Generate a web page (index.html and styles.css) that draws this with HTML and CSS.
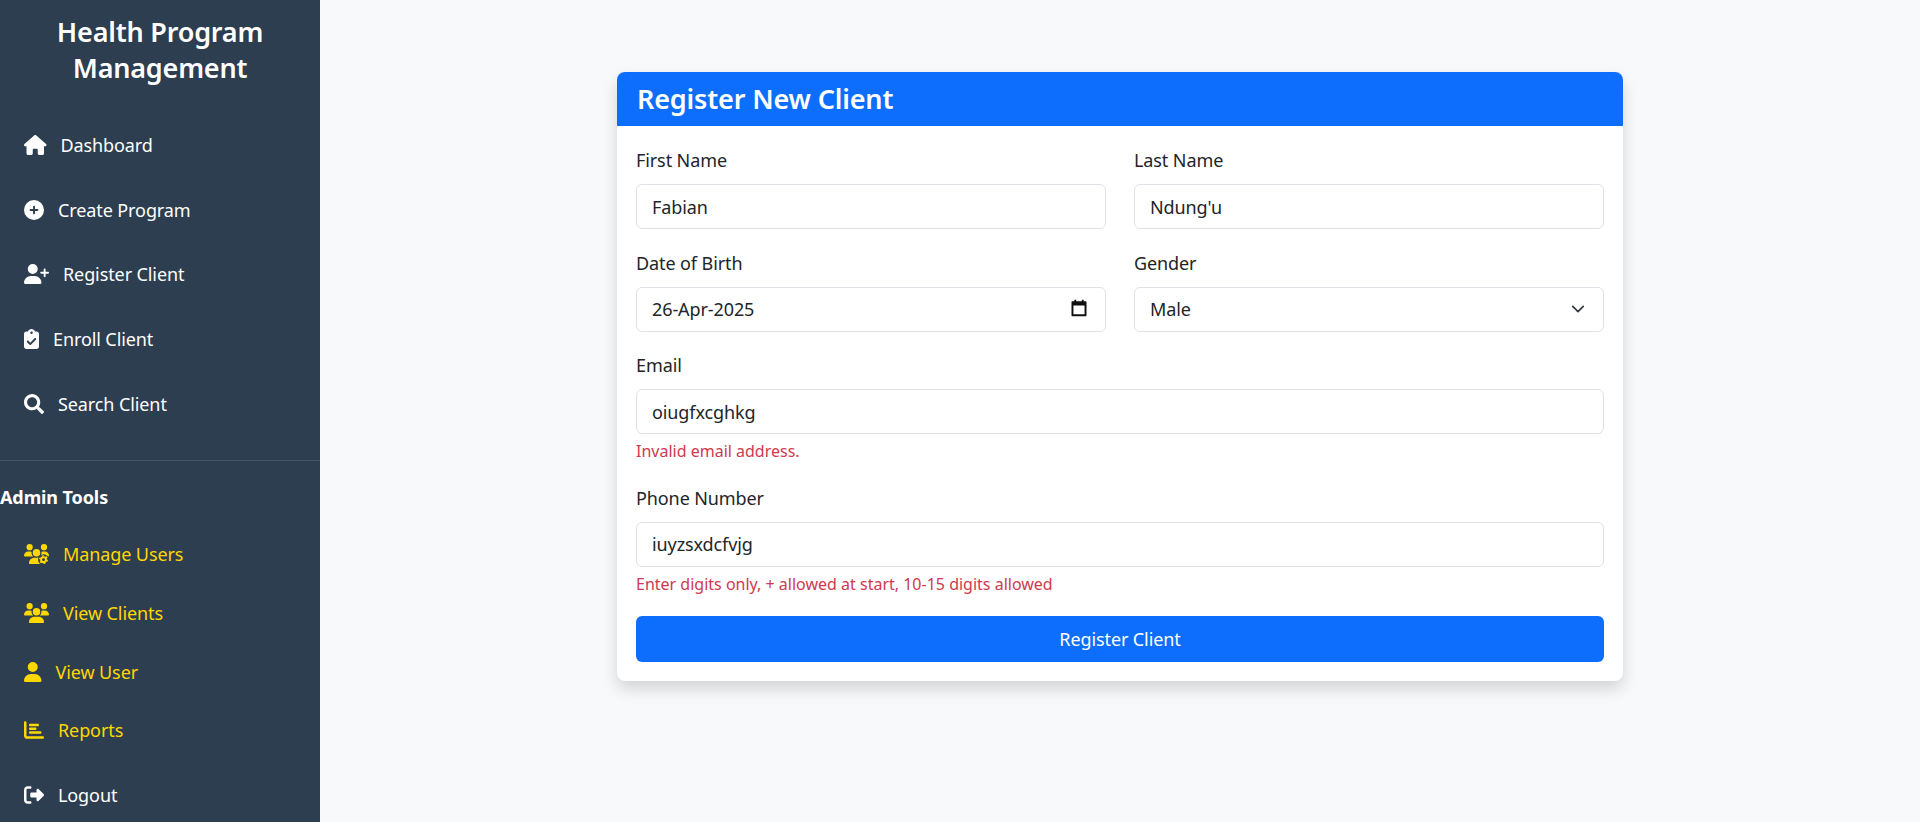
FILE: index.html
```html
<!DOCTYPE html>
<html lang="en">
  <head>
    <meta charset="UTF-8" />
    <meta name="viewport" content="width=device-width, initial-scale=1.0" />
    <title>Register New Client</title>
    <link rel="stylesheet" href="styles.css">
  </head>
  <body>
    <aside class="sidebar">
      <h2 class="brand">Health Program Management</h2>
      <nav class="nav-main">
        <a class="nav-link" href="#"><svg class="icon" viewBox="0 0 576 512"><path d="M575.8 255.5c0 18-15 32.1-32 32.1h-32l.7 160.2c0 2.7-.2 5.4-.5 8.1V472c0 22.1-17.9 40-40 40H456c-1.1 0-2.2 0-3.3-.1c-1.4 .1-2.8 .1-4.2 .1H416 392c-22.1 0-40-17.9-40-40V448 384c0-17.7-14.3-32-32-32H256c-17.7 0-32 14.3-32 32v64 24c0 22.1-17.9 40-40 40H160 128.1c-1.5 0-3-.1-4.5-.2c-1.2 .1-2.4 .2-3.6 .2H104c-22.1 0-40-17.9-40-40V360c0-.9 0-1.9 .1-2.8V287.6H32c-18 0-32-14-32-32.1c0-9 3-17 10-24L266.4 8c7-7 15-8 22-8s15 2 21 7L564.8 231.5c8 7 12 15 11 24z"/></svg>Dashboard</a>
        <a class="nav-link" href="#"><svg class="icon" viewBox="0 0 512 512"><path d="M256 512A256 256 0 1 0 256 0a256 256 0 1 0 0 512zM232 344V280H168c-13.3 0-24-10.7-24-24s10.7-24 24-24h64V168c0-13.3 10.7-24 24-24s24 10.7 24 24v64h64c13.3 0 24 10.7 24 24s-10.7 24-24 24H280v64c0 13.3-10.7 24-24 24s-24-10.7-24-24z"/></svg>Create Program</a>
        <a class="nav-link" href="#"><svg class="icon" viewBox="0 0 640 512"><path d="M96 128a128 128 0 1 1 256 0A128 128 0 1 1 96 128zM0 482.3C0 383.8 79.8 304 178.3 304h91.4C368.2 304 448 383.8 448 482.3c0 16.4-13.3 29.7-29.7 29.7H29.7C13.3 512 0 498.7 0 482.3zM504 312V248H440c-13.3 0-24-10.7-24-24s10.7-24 24-24h64V136c0-13.3 10.7-24 24-24s24 10.7 24 24v64h64c13.3 0 24 10.7 24 24s-10.7 24-24 24H552v64c0 13.3-10.7 24-24 24s-24-10.7-24-24z"/></svg>Register Client</a>
        <a class="nav-link" href="#"><svg class="icon" viewBox="0 0 384 512"><path d="M192 0c-41.8 0-77.4 26.7-90.5 64H64C28.7 64 0 92.7 0 128V448c0 35.3 28.7 64 64 64H320c35.3 0 64-28.7 64-64V128c0-35.3-28.7-64-64-64H282.5C269.4 26.7 233.8 0 192 0zm0 64a32 32 0 1 1 0 64 32 32 0 1 1 0-64zM305 273L177 401c-9.4 9.4-24.6 9.4-33.9 0L79 337c-9.4-9.4-9.4-24.6 0-33.9s24.6-9.4 33.9 0l47 47L271 239c9.4-9.4 24.6-9.4 33.9 0s9.4 24.6 0 33.9z"/></svg>Enroll Client</a>
        <a class="nav-link" href="#"><svg class="icon" viewBox="0 0 512 512"><path d="M505 442.7L405.3 343c-4.5-4.5-10.6-7-17-7H372c27.6-35.3 44-79.7 44-128C416 93.1 322.9 0 208 0S0 93.1 0 208s93.1 208 208 208c48.3 0 92.7-16.4 128-44v16.3c0 6.4 2.5 12.5 7 17l99.7 99.7c9.4 9.4 24.6 9.4 33.9 0l28.3-28.3c9.4-9.4 9.4-24.6.1-34zM208 336c-70.7 0-128-57.2-128-128 0-70.7 57.2-128 128-128 70.7 0 128 57.2 128 128 0 70.7-57.2 128-128 128z"/></svg>Search Client</a>
      </nav>
      <div class="admin">
        <h3 class="admin-title">Admin Tools</h3>
        <a class="nav-link admin-link" href="#"><svg class="icon" viewBox="0 0 640 512"><path d="M144 0a80 80 0 1 1 0 160A80 80 0 1 1 144 0zM512 0a80 80 0 1 1 0 160A80 80 0 1 1 512 0zM0 298.7C0 239.8 47.8 192 106.7 192h42.7c15.9 0 31 3.5 44.6 9.7c-1.3 7.2-1.9 14.7-1.9 22.3c0 38.2 16.8 72.5 43.3 96c-.2 0-.4 0-.7 0H21.3C9.6 320 0 310.4 0 298.7zM405.3 320c-.2 0-.4 0-.7 0c26.6-23.5 43.3-57.8 43.3-96c0-7.6-.7-15-1.9-22.3c13.6-6.3 28.7-9.7 44.6-9.7h42.7C592.2 192 640 239.8 640 298.7c0 11.8-9.6 21.3-21.3 21.3H405.3zM224 224a96 96 0 1 1 192 0 96 96 0 1 1 -192 0zM128 485.3C128 411.7 187.7 352 261.3 352H378.7C452.3 352 512 411.7 512 485.3c0 14.7-11.9 26.7-26.7 26.7H154.7c-14.7 0-26.7-11.9-26.7-26.7z"/><circle cx="500" cy="400" r="140" fill="#2c3e50"/><circle cx="500" cy="400" r="62" fill="none" stroke="currentColor" stroke-width="50"/><circle cx="500" cy="400" r="94" fill="none" stroke="currentColor" stroke-width="40" stroke-dasharray="48 50"/></svg>Manage Users</a>
        <a class="nav-link admin-link" href="#"><svg class="icon" viewBox="0 0 640 512"><path d="M144 0a80 80 0 1 1 0 160A80 80 0 1 1 144 0zM512 0a80 80 0 1 1 0 160A80 80 0 1 1 512 0zM0 298.7C0 239.8 47.8 192 106.7 192h42.7c15.9 0 31 3.5 44.6 9.7c-1.3 7.2-1.9 14.7-1.9 22.3c0 38.2 16.8 72.5 43.3 96c-.2 0-.4 0-.7 0H21.3C9.6 320 0 310.4 0 298.7zM405.3 320c-.2 0-.4 0-.7 0c26.6-23.5 43.3-57.8 43.3-96c0-7.6-.7-15-1.9-22.3c13.6-6.3 28.7-9.7 44.6-9.7h42.7C592.2 192 640 239.8 640 298.7c0 11.8-9.6 21.3-21.3 21.3H405.3zM224 224a96 96 0 1 1 192 0 96 96 0 1 1 -192 0zM128 485.3C128 411.7 187.7 352 261.3 352H378.7C452.3 352 512 411.7 512 485.3c0 14.7-11.9 26.7-26.7 26.7H154.7c-14.7 0-26.7-11.9-26.7-26.7z"/></svg>View Clients</a>
        <a class="nav-link admin-link" href="#"><svg class="icon" viewBox="0 0 448 512"><path d="M224 256A128 128 0 1 0 224 0a128 128 0 1 0 0 256zm-45.7 48C79.8 304 0 383.8 0 482.3C0 498.7 13.3 512 29.7 512H418.3c16.4 0 29.7-13.3 29.7-29.7C448 383.8 368.2 304 269.7 304H178.3z"/></svg>View User</a>
        <a class="nav-link admin-link" href="#"><svg class="icon" viewBox="0 0 512 512"><path d="M32 32c17.7 0 32 14.3 32 32V400c0 8.8 7.2 16 16 16H480c17.7 0 32 14.3 32 32s-14.3 32-32 32H80c-44.2 0-80-35.8-80-80V64C0 46.3 14.3 32 32 32zm96 96c0-17.7 14.3-32 32-32l192 0c17.7 0 32 14.3 32 32s-14.3 32-32 32l-192 0c-17.7 0-32-14.3-32-32zm32 64H288c17.7 0 32 14.3 32 32s-14.3 32-32 32H160c-17.7 0-32-14.3-32-32s14.3-32 32-32zm0 96H416c17.7 0 32 14.3 32 32s-14.3 32-32 32H160c-17.7 0-32-14.3-32-32s14.3-32 32-32z"/></svg>Reports</a>
        <a class="nav-link logout" href="#"><svg class="icon" viewBox="0 0 512 512"><path d="M377.9 105.9L500.7 228.7c7.2 7.2 11.3 17.1 11.3 27.3s-4.1 20.1-11.3 27.3L377.9 406.1c-6.4 6.4-15 9.9-24 9.9c-18.7 0-33.9-15.2-33.9-33.9l0-62.1-128 0c-17.7 0-32-14.3-32-32l0-64c0-17.7 14.3-32 32-32l128 0 0-62.1c0-18.7 15.2-33.9 33.9-33.9c9 0 17.6 3.6 24 9.9zM160 96L96 96c-17.7 0-32 14.3-32 32l0 256c0 17.7 14.3 32 32 32l64 0c17.7 0 32 14.3 32 32s-14.3 32-32 32l-64 0c-53 0-96-43-96-96L0 128C0 75 43 32 96 32l64 0c17.7 0 32 14.3 32 32s-14.3 32-32 32z"/></svg>Logout</a>
      </div>
    </aside>
    <main class="content">
      <section class="card">
        <h1 class="card-header">Register New Client</h1>
        <form class="card-body">
          <div class="row">
            <div class="field">
              <label class="field-label" for="first">First Name</label>
              <input class="control" id="first" type="text" value="Fabian" />
            </div>
            <div class="field">
              <label class="field-label" for="last">Last Name</label>
              <input class="control" id="last" type="text" value="Ndung'u" />
            </div>
          </div>
          <div class="row">
            <div class="field">
              <label class="field-label" for="dob">Date of Birth</label>
              <div class="control-wrap">
                <input class="control" id="dob" type="text" value="26-Apr-2025" />
                <svg class="date-icon" viewBox="0 0 24 24"><path d="M7 1v3M17 1v3" stroke="#111" stroke-width="2.4" fill="none"/><path fill-rule="evenodd" d="M3 3h18a1 1 0 0 1 1 1v18a1 1 0 0 1-1 1H3a1 1 0 0 1-1-1V4a1 1 0 0 1 1-1zM4.6 8.5v11.9h14.8V8.5z" fill="#111"/></svg>
              </div>
            </div>
            <div class="field">
              <label class="field-label" for="gender">Gender</label>
              <div class="control-wrap">
                <select class="control select" id="gender"><option>Male</option><option>Female</option></select>
                <svg class="select-icon" viewBox="0 0 16 16"><path d="M2 5l6 6 6-6" fill="none" stroke="#343a40" stroke-width="2" stroke-linecap="round" stroke-linejoin="round"/></svg>
              </div>
            </div>
          </div>
          <div class="field">
            <label class="field-label" for="email">Email</label>
            <input class="control" id="email" type="text" value="oiugfxcghkg" />
            <div class="field-error">Invalid email address.</div>
          </div>
          <div class="field">
            <label class="field-label" for="phone">Phone Number</label>
            <input class="control" id="phone" type="text" value="iuyzsxdcfvjg" />
            <div class="field-error">Enter digits only, + allowed at start, 10-15 digits allowed</div>
          </div>
          <button class="submit" type="button">Register Client</button>
        </form>
      </section>
    </main>
  </body>
</html>
```

FILE: styles.css
```css
* {
  box-sizing: border-box;
}
html,
body {
  height: 100%;
}
body {
  margin: 0;
  display: flex;
  overflow: hidden;
  font-family: "Noto Sans", "Open Sans", sans-serif;
  font-size: 18px;
  color: #212529;
  background: #f8f9fa;
}
.sidebar {
  flex: 0 0 320px;
  height: 100vh;
  overflow: hidden;
  background: #2c3e50;
  color: #fff;
}
.brand {
  margin: 14px 24px 0;
  font-size: 27px;
  font-weight: 600;
  line-height: 36px;
  letter-spacing: -0.2px;
  text-align: center;
}
.nav-main {
  display: flex;
  flex-direction: column;
  margin-top: 26.5px;
  padding-bottom: 23.5px;
  border-bottom: 1px solid #445566;
}
.nav-link {
  display: flex;
  align-items: center;
  gap: 14px;
  height: 64.75px;
  padding-left: 24px;
  font-size: 18px;
  letter-spacing: -0.1px;
  color: #fff;
  text-decoration: none;
}
.icon {
  height: 20px;
  flex: none;
  fill: currentColor;
}
.admin-title {
  margin: 23px 0 15px;
  font-size: 18px;
  font-weight: 700;
  line-height: 26px;
  letter-spacing: -0.1px;
}
.admin-link {
  height: 58.75px;
  color: #ffd700;
}
.logout {
  margin-top: 3px;
}
.content {
  flex: 1;
  display: flex;
  justify-content: center;
  align-items: flex-start;
  padding-top: 72px;
}
.card {
  width: 1006px;
  background: #fff;
  border-radius: 8px;
  overflow: hidden;
  box-shadow: 0 8px 16px rgba(0, 0, 0, 0.15);
}
.card-header {
  margin: 0;
  height: 54px;
  padding: 0 20px;
  font-size: 27px;
  font-weight: 600;
  line-height: 54px;
  letter-spacing: -0.15px;
  color: #fff;
  background: #0d6efd;
}
.card-body {
  display: flex;
  flex-direction: column;
  gap: 20.5px;
  padding: 21px 19px 19px;
}
.row {
  display: grid;
  grid-template-columns: 1fr 1fr;
  gap: 28px;
}
.field-label {
  display: block;
  margin-bottom: 10px;
  font-size: 18px;
  line-height: 27px;
  letter-spacing: -0.1px;
}
.control-wrap {
  position: relative;
}
.control {
  display: block;
  width: 100%;
  height: 45px;
  padding: 0 15px;
  font-family: inherit;
  font-size: 18px;
  letter-spacing: -0.1px;
  color: #212529;
  background: #fff;
  border: 1px solid #dee2e6;
  border-radius: 6px;
}
.select {
  appearance: none;
}
.date-icon {
  position: absolute;
  top: 12px;
  right: 18px;
  width: 18px;
  height: 18px;
}
.select-icon {
  position: absolute;
  top: 15px;
  right: 19px;
  width: 14px;
  height: 14px;
}
.field-error {
  margin-top: 5px;
  margin-bottom: 1px;
  font-size: 16px;
  line-height: 24px;
  color: #cf3a4e;
}
.submit {
  height: 46px;
  margin-top: -1px;
  font-family: inherit;
  font-size: 18px;
  letter-spacing: -0.1px;
  color: #fff;
  background: #0d6efd;
  border: 0;
  border-radius: 6px;
}
```
